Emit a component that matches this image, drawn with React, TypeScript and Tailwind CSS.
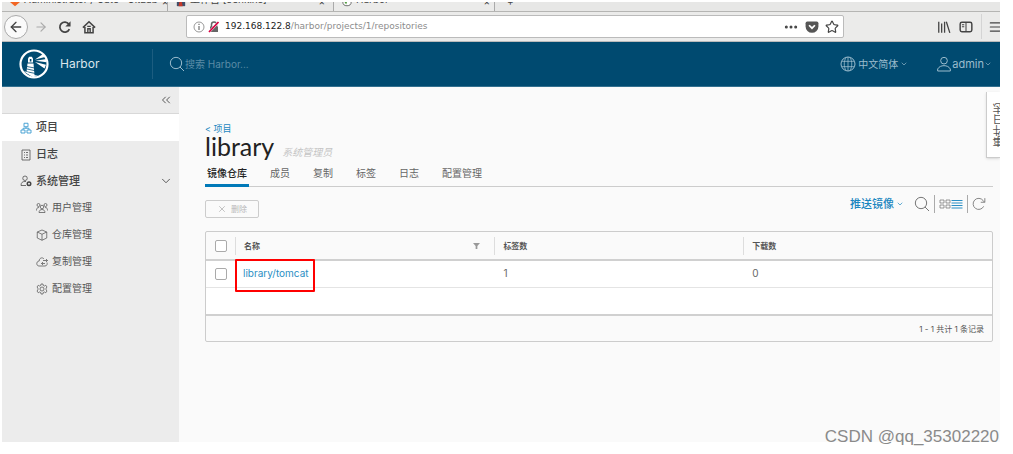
import type { ReactNode } from 'react';
import { ArrowLeft, ArrowRight, ChevronDown, ChevronsLeft, Menu, MoreHorizontal, Star, X } from 'lucide-react';
import clsx from 'clsx';

interface GlyphProps {
  className?: string;
  children: ReactNode;
}

function Glyph({ className, children }: GlyphProps) {
  return (
    <svg
      viewBox="0 0 24 24"
      fill="none"
      stroke="currentColor"
      strokeWidth={1.5}
      aria-hidden="true"
      className={clsx('flex-shrink-0', className)}
    >
      {children}
    </svg>
  );
}

const LogoIcon = () => (
  <svg viewBox="0 0 32 32" aria-hidden="true" className="w-8 h-8 flex-shrink-0">
    <circle cx="16" cy="16" r="13.5" fill="none" stroke="#fff" strokeWidth="2.2" />
    <path d="M10 14.500v-4l1.200-1.700h2.600l1.200 1.700v4z" fill="#fff" />
    <path d="M11.800 11h1.600v2.500h-1.600z" fill="#004a70" />
    <path d="M9.500 15.500h6l1 11.500-3 1-5-3.500z" fill="#fff" />
    <path d="M9 18.500l7.500 1.500M9 21l8 1.700M8.500 23.700l8.500 1.700" stroke="#004a70" strokeWidth="0.8" />
    <path d="M17 11.500l8-5.500 2.200 3zM17.500 12.700l11-1.700v3.300zM17 14l11 2.800-1.500 3.700z" fill="#fff" />
    <path d="M6 23.500c4 0 6 2.500 10 3.500l4 .8-5 1.500z" fill="#fff" />
  </svg>
);

const ReloadIcon = () => (
  <Glyph className="w-3.5 h-3.5">
    <path d="M19.500 15.500A8.500 8.500 0 1 1 18.500 7" strokeWidth={3} />
    <path d="M21.500 2v9h-9z" fill="currentColor" stroke="none" />
  </Glyph>
);

const HomeIcon = () => (
  <Glyph className="w-3.5 h-3.5">
    <path d="M1.500 13 12 3l10.500 10M5 12v10h14V12" strokeWidth={2.600} />
    <path d="M10 22v-7h4v7M9 11h6" strokeWidth={2.400} />
  </Glyph>
);

const InsecureIcon = () => (
  <Glyph className="w-3 h-3">
    <path d="M4 11h16v11H4z" fill="#666" stroke="none" />
    <path d="M7 12V7a5 5 0 0 1 10 0v5" stroke="#666" strokeWidth={3} />
    <path d="M2 22 21 2" stroke="#fff" strokeWidth={5} />
    <path d="M2 22 21 2" stroke="#d70040" strokeWidth={3.600} />
  </Glyph>
);

const PocketIcon = () => (
  <Glyph className="w-3.5 h-3.5">
    <path d="M4 2.500h16q3 0 3 3V11a11 11 0 0 1-22 0V5.500q0-3 3-3z" fill="#555" stroke="none" />
    <path d="m7 9 5 5 5-5" stroke="#fff" strokeWidth={3} />
  </Glyph>
);

const LibraryIcon = () => (
  <Glyph className="w-3.5 h-3.5">
    <path d="M3 3v19M8 6v16M13 3v19M16 3l6 19" strokeWidth={2.200} />
  </Glyph>
);

const ReaderIcon = () => (
  <Glyph className="w-3.5 h-3.5">
    <rect x="2" y="4" width="20" height="16" rx="3" strokeWidth={2.500} />
    <path d="M12 4v16M5 8h4M5 11.500h4" strokeWidth={1.800} />
  </Glyph>
);

const SearchIcon = () => (
  <Glyph className="w-4 h-4">
    <circle cx="10.500" cy="10.500" r="8.500" />
    <path d="m16.500 16.500 6 6" />
  </Glyph>
);

const GlobeIcon = () => (
  <Glyph className="w-4 h-4">
    <circle cx="12" cy="12" r="10.500" />
    <path d="M12 1.500v21M2.500 8h19M2.500 16h19M9 2C5.500 8 5.500 16 9 22M15 2c3.500 6 3.500 14 0 20" strokeWidth={1.200} />
  </Glyph>
);

const UserIcon = () => (
  <Glyph className="w-4 h-4">
    <circle cx="12" cy="7" r="5" />
    <path d="M2.500 22.500v-3c2-3.500 5.500-5 9.500-5s7.500 1.500 9.500 5v3z" />
  </Glyph>
);

const ProjectsIcon = () => (
  <Glyph className="w-3 h-3 text-[#3a9bd0]">
    <path d="M8 2.500h8v7H8zM2 16h8v6H2zM14 16h8v6h-8zM12 9.500v3M6 16v-3.500h12V16" strokeWidth={1.800} />
  </Glyph>
);

const LogsIcon = () => (
  <Glyph className="w-3 h-3">
    <path d="M4 2h16v20H4zM8 7h2M12 7h4M8 12h2M12 12h4M8 17h2M12 17h4" />
  </Glyph>
);

const AdminIcon = () => (
  <Glyph className="w-3 h-3">
    <circle cx="10" cy="6.500" r="4.500" />
    <path d="M12 21H2c0-6 3-8 8-8h2" />
    <circle cx="18" cy="17.500" r="3.500" strokeWidth={3} />
  </Glyph>
);

const UsersIcon = () => (
  <Glyph className="w-3 h-3">
    <circle cx="12" cy="10" r="3.500" />
    <circle cx="5" cy="6" r="3" />
    <circle cx="19" cy="6" r="3" />
    <path d="M6 21c0-8 12-8 12 0zM1 17c0-4 1-6 5-6M23 17c0-4-1-6-5-6" />
  </Glyph>
);

const BoxIcon = () => (
  <Glyph className="w-3 h-3">
    <path d="m12 2 9.500 4v12L12 22.500 2.500 18V6zM2.500 6 12 10.500 21.500 6M12 10.500v12" />
  </Glyph>
);

const CloudIcon = () => (
  <Glyph className="w-3 h-3">
    <path d="M16 6C12 1 6 5 6.500 10 0 10 0 20 6 20h12c4 0 5-4 4-7M23 9h-9m6-3 3 3-3 3M18 15h-7m3-3-3 3 3 3" />
  </Glyph>
);

const GearIcon = () => (
  <Glyph className="w-3 h-3">
    <path d="m10 2-.6 3-2.500 1L4.500 4.500 2 8l1.800 2.200v3.600L2 16l2.500 3.500L7 18l2.500 1 .5 3h4l.5-3 2.500-1 2.500 1.500L22 16l-1.800-2.200v-3.600L22 8l-2.500-3.500L17 6l-2.500-1L14 2z" />
    <circle cx="12" cy="12" r="4" />
  </Glyph>
);

const navItems = [
  { id: 'projects', label: '项目', icon: ProjectsIcon },
  { id: 'logs', label: '日志', icon: LogsIcon },
];

const adminItems = [
  { id: 'users', label: '用户管理', icon: UsersIcon },
  { id: 'registries', label: '仓库管理', icon: BoxIcon },
  { id: 'replications', label: '复制管理', icon: CloudIcon },
  { id: 'configs', label: '配置管理', icon: GearIcon },
];

const tabs = ['镜像仓库', '成员', '复制', '标签', '日志', '配置管理'];

function BrowserBar() {
  return (
    <div className="bg-[#ebebea] text-[#444]">
      <div className="flex h-[10px] overflow-hidden border-b border-[#b5b5b3] bg-[#e7e7e6] text-[10px] leading-[10px]">
        <div className="flex w-[165px] gap-1 pl-2">
          <svg viewBox="0 0 12 6" aria-hidden="true" className="w-2.5 h-[5px] flex-shrink-0">
            <path d="M0 0h12L6 5z" fill="#f26522" />
          </svg>
          <span className="-mt-2 flex-1 whitespace-nowrap">Administrator / Gate · GitLab</span>
          <span className="-mt-1.5 pr-2">×</span>
        </div>
        <div className="flex w-[167px] gap-1 border-x border-[#aaa] pl-2">
          <svg viewBox="0 0 12 6" aria-hidden="true" className="w-2.5 h-[5px] flex-shrink-0">
            <path d="M1 0h10v5H1z" fill="#41506b" />
            <path d="M4 0h3l1 5H3z" fill="#c53a2b" />
          </svg>
          <span className="-mt-2 flex-1 whitespace-nowrap">工作台 [Jenkins]</span>
          <span className="-mt-1.5 pr-2">×</span>
        </div>
        <div className="flex w-[161px] gap-1 border-r border-[#aaa] bg-[#ebebea] pl-2">
          <svg viewBox="0 0 12 6" aria-hidden="true" className="w-2.5 h-[5px] flex-shrink-0">
            <path d="M1 0a5 4.500 0 0 0 10 0" fill="#fff" stroke="#555" />
            <path d="M3 0h3l-1 3z" fill="#4d9a3a" />
          </svg>
          <span className="-mt-2 flex-1">Harbor</span>
          <span className="-mt-1.5 pr-1">×</span>
        </div>
        <span className="-mt-1.5 pl-3">+</span>
      </div>
      <div className="flex h-[30px] items-center border-b border-[#bbb] pl-0.5">
        <button aria-label="Back" className="flex w-6 h-6 items-center justify-center rounded-full border border-[#aaa] bg-[#fafafa]">
          <ArrowLeft className="w-4 h-4" />
        </button>
        <div className="flex items-center gap-2.5 pl-1.5">
          <button aria-label="Forward" className="text-[#aaa]"><ArrowRight className="w-3.5 h-3.5" /></button>
          <button aria-label="Reload"><ReloadIcon /></button>
          <button aria-label="Home"><HomeIcon /></button>
        </div>
        <div className="ml-[90px] flex h-[23px] w-[658px] items-center gap-[3px] rounded-[2px] border border-[#bbb] bg-white pl-1.5 pr-1">
          <Glyph className="w-3 h-3 text-[#777]">
            <circle cx="12" cy="12" r="10" />
            <path d="M12 10v8M12 5.500v2.500" strokeWidth={2.500} />
          </Glyph>
          <InsecureIcon />
          <p className="flex-1 pl-0.5 font-['DejaVu_Sans'] text-[9px] text-[#8c8c8c]">
            <span className="text-[#222]">192.168.122.8</span>/harbor/projects/1/repositories
          </p>
          <div className="flex items-center gap-1.5">
            <button aria-label="Page actions"><MoreHorizontal className="w-4 h-4" strokeWidth={2.5} /></button>
            <button aria-label="Save to Pocket"><PocketIcon /></button>
            <button aria-label="Bookmark"><Star className="w-3.5 h-3.5" /></button>
          </div>
        </div>
        <div className="flex flex-1 items-center justify-end gap-2">
          <button aria-label="Library"><LibraryIcon /></button>
          <button aria-label="Sidebars"><ReaderIcon /></button>
          <div className="flex h-[25px] items-center overflow-hidden border-l border-[#d4d4d4] pl-1.5">
            <button aria-label="Menu" className="-mr-0.5"><Menu className="w-3.5 h-3.5" /></button>
          </div>
        </div>
      </div>
    </div>
  );
}

function Header() {
  return (
    <header className="flex h-[45px] items-center border-b border-[#33708f] bg-[#004a70] text-[#9bbccd]">
      <a href="#home" className="flex w-[150px] items-center gap-2.5 pl-4 text-[12px] text-[#dbe6ec]">
        <LogoIcon />
        Harbor
      </a>
      <label className="flex h-[30px] flex-1 items-center border-l border-[#1c5d80] pl-4">
        <SearchIcon />
        <input
          type="search"
          aria-label="搜索"
          placeholder="搜索 Harbor..."
          className="w-40 bg-transparent text-[10px] outline-none placeholder:text-[#5b8ca6]"
        />
      </label>
      <button className="flex items-center gap-0.5 text-[10px]">
        <GlobeIcon />
        <span>中文简体</span>
        <ChevronDown className="w-2 h-2" />
      </button>
      <button className="ml-7 mr-2 flex items-center text-[11px]">
        <UserIcon />
        <span>admin</span>
        <ChevronDown className="w-2 h-2" />
      </button>
    </header>
  );
}

function Sidebar() {
  return (
    <aside className="w-[177px] flex-shrink-0 bg-[#ececec] text-[#454545]">
      <div className="flex h-[27px] items-center justify-end border-b border-[#d8d8d8] pr-1.5">
        <button aria-label="Collapse"><ChevronsLeft className="w-3.5 h-3.5" strokeWidth={1.5} /></button>
      </div>
      <nav>
        {navItems.map(({ id, label, icon: Icon }) => (
          <a
            key={id}
            href={`#${id}`}
            className={clsx('flex h-[27px] items-center gap-1 pl-[18px] text-[11px] font-medium', id === 'projects' && 'bg-white')}
          >
            <Icon />
            {label}
          </a>
        ))}
        <button className="flex h-[26px] w-full items-center gap-1 pl-[18px] pr-1.5 text-[11px] font-medium">
          <AdminIcon />
          <span className="flex-1 text-left">系统管理</span>
          <ChevronDown className="w-3.5 h-3.5" strokeWidth={1.5} />
        </button>
        {adminItems.map(({ id, label, icon: Icon }) => (
          <a key={id} href={`#${id}`} className="flex h-[27px] items-center gap-1 pl-[34px] text-[10px] text-[#565656]">
            <Icon />
            {label}
          </a>
        ))}
      </nav>
    </aside>
  );
}

function RepositoryTable() {
  return (
    <div className="mt-[13px] overflow-hidden rounded-[2px] border border-[#ccc]">
      <table className="w-full table-fixed border-collapse text-left">
        <colgroup>
          <col className="w-[29px]" />
          <col className="w-[33%]" />
          <col />
          <col />
        </colgroup>
        <thead className="border-b-2 border-[#d0d0d0] text-[8px] text-[#555]">
          <tr className="h-7">
            <th className="pl-[9px]"><input type="checkbox" aria-label="全选" className="block w-3 h-3 appearance-none rounded-[2px] border border-[#aaa] bg-white" /></th>
            <th>
              <div className="flex h-[18px] items-center justify-between border-l border-[#ddd] pl-2 pr-3.5">
                名称
                <button aria-label="过滤">
                  <svg viewBox="0 0 8 8" aria-hidden="true" className="w-[7px] h-[7px]"><path d="M0 1h8L5 4.500V8H3V4.500z" fill="#999" /></svg>
                </button>
              </div>
            </th>
            <th><div className="flex h-[18px] items-center border-l border-[#ddd] pl-2">标签数</div></th>
            <th><div className="flex h-[18px] items-center border-l border-[#ddd] pl-2">下载数</div></th>
          </tr>
        </thead>
        <tbody className="bg-white text-[10px] text-[#666]">
          <tr className="h-[27px] border-b border-[#e4e4e4]">
            <td className="pl-[9px]"><input type="checkbox" aria-label="library/tomcat" className="block w-3 h-3 appearance-none rounded-[2px] border border-[#aaa] bg-white" /></td>
            <td className="relative pl-2">
              <a href="#tomcat" className="text-[#2a8fc4]">library/tomcat</a>
              <span className="pointer-events-none absolute -top-0.5 left-0 h-[33px] w-20 rounded-[1px] border-2 border-[#ff0000]" />
            </td>
            <td className="pl-[9px]">1</td>
            <td className="pl-[9px]">0</td>
          </tr>
          <tr className="h-[27px]"><td colSpan={4} /></tr>
        </tbody>
      </table>
      <div className="flex h-[27px] items-center justify-end border-t-2 border-[#d0d0d0] pr-2 text-[8px] text-[#555]">
        1 - 1 共计 1 条记录
      </div>
    </div>
  );
}

export default function App() {
  return (
    <div className="bg-white pt-0.5 pl-0.5 pr-[13px] pb-3 font-[Inter,'Noto_Sans_CJK_SC',sans-serif]">
      <div className="relative overflow-hidden">
        <BrowserBar />
        <Header />
        <div className="flex min-h-[355px]">
          <Sidebar />
          <main className="relative min-w-0 flex-1 bg-[#fafafa] pt-9 pl-[26px] pr-[7px]">
            <a href="#projects" className="block text-[9px] leading-[12px] text-[#1a86c0]">&lt; 项目</a>
            <h1 className="flex h-[26px] items-baseline gap-2 font-[Lato,'Noto_Sans_CJK_SC',sans-serif] text-[25px] leading-[22px] text-[#222]">
              library
              <span className="text-[10px] italic text-[#c4c4c4]">系统管理员</span>
            </h1>
            <div className="flex h-[26px] gap-[19px] border-b border-[#ccc] text-[10px] text-[#666]">
              {tabs.map((tab, i) => (
                <button
                  key={tab}
                  className={clsx('h-[26px] border-b-[3px] px-0.5 pt-0.5', i === 0 ? 'border-[#0079b8] font-medium text-[#222]' : 'border-transparent')}
                >
                  {tab}
                </button>
              ))}
            </div>
            <div className="mt-[7px] flex h-6 text-[#777]">
              <button disabled className="flex h-[18px] w-[54px] items-center justify-center gap-1 self-end rounded-[2px] border border-[#ccc] text-[8px] text-[#b8b8b8]">
                <X className="w-2.5 h-2.5" />
                删除
              </button>
              <div className="flex h-5 flex-1 items-center justify-end pr-[7px]">
                <button className="mr-2.5 flex items-center gap-0.5 text-[11px] font-medium text-[#1a86c0]">
                  推送镜像
                  <ChevronDown className="w-2 h-2" />
                </button>
                <button aria-label="搜索"><SearchIcon /></button>
                <div className="ml-1 flex h-[18px] items-center border-x border-[#aaa] px-1">
                  <button aria-label="卡片">
                    <Glyph className="w-3 h-3"><path d="M2 4h8v6H2zM14 4h8v6h-8zM2 14h8v6H2zM14 14h8v6h-8z" /></Glyph>
                  </button>
                  <button aria-label="列表" className="text-[#2a8fc4]">
                    <Glyph className="w-3 h-3"><path d="M1 5h22M1 10h22M1 15h22M1 20h22" strokeWidth={2} /></Glyph>
                  </button>
                </div>
                <button aria-label="刷新" className="ml-1">
                  <Glyph className="w-3.5 h-3.5"><path d="M20 16a9.500 9.500 0 1 1-1-10l2.500 3M22 2v7h-7" /></Glyph>
                </button>
              </div>
            </div>
            <RepositoryTable />
            <button className="absolute top-[5px] right-0 h-[66px] w-3.5 overflow-hidden border-b border-l border-[#ccc] bg-white pl-[5px] text-[11px] leading-[14px] text-[#555] shadow">
              <span className="block rotate-180 whitespace-nowrap [writing-mode:vertical-rl]">事件日志</span>
            </button>
          </main>
        </div>
      </div>
      <p className="absolute top-[427px] right-3.5 font-['Liberation_Sans'] text-[17px] leading-5 text-[#8a8a8a]">CSDN @qq_35302220</p>
    </div>
  );
}
